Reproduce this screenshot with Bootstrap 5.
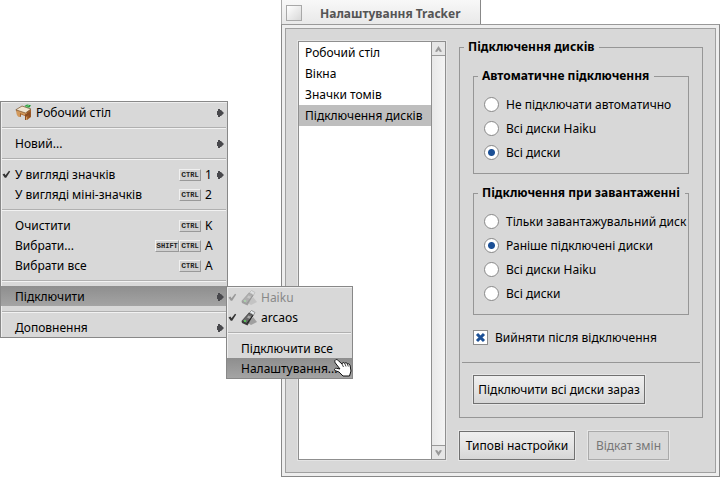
<!DOCTYPE html>
<html lang="uk">
<head>
<meta charset="utf-8">
<meta name="viewport" content="width=device-width, initial-scale=1">
<title>Налаштування Tracker</title>
<link rel="stylesheet" href="https://cdn.jsdelivr.net/npm/bootstrap@5.3.0/dist/css/bootstrap.min.css">
<style>
  body { font: 12px/20px "Noto Sans", sans-serif; color: #000; background: #fff; min-height: 100vh; }
  a { color: inherit; text-decoration: none; }

  /* Tracker settings window */
  .win { left: 281px; right: 0; top: 0; }
  .win-tab { width: 200px; height: 25px; margin-bottom: -1px; padding-left: 4px; gap: 18px; border: 1px solid #aaa; border-width: 0 1px 0 1px; border-right-color: #888; background: linear-gradient(#f8f8f8, #e8e8e8); color: #555; }
  .win-close { width: 16px; height: 16px; border: 1px solid #a8a8a8; background: linear-gradient(135deg, #fff, #d8d8d8); }
  .win-title { padding-top: 2px; }
  .win-frame { border: 1px solid #888; border-top-color: #999; background: #eee; padding: 3px; }
  .win-body { border: 1px solid #a0a0a0; background: #d8d8d8; padding: 12px; gap: 13px; }
  .pane-list { width: 148px; border: 1px solid #8f8f8f; background: #fff; box-shadow: 0 0 0 1px #e4e4e4; }
  .pane-list a { line-height: 21px; padding: 0 6px; }
  .pane-list a.current { background: #bebebe; }
  .sbar { width: 14px; border-left: 1px solid #8f8f8f; background: linear-gradient(90deg, #e8e8e8, #f4f4f4); }
  .sbar button { height: 14px; border: 0; border-bottom: 1px solid #999; background: #e6e6e6; }
  .sbar button:last-child { border-bottom: 0; border-top: 1px solid #999; }

  .settings { min-width: 0; }
  fieldset.box { border: 1px solid #969696; }
  fieldset.boot { margin-top: 13px; }
  fieldset.box > legend { float: none; width: auto; height: 13px; margin: 0 0 0 4px; padding: 0 5px 0 4px; font-size: 12px; line-height: 11px; font-weight: 700; white-space: nowrap; }
  .outer-in { padding: 16px 13px 13px; }
  .inner-in { padding: 9px 0 9px 10px; }
  .opt { height: 24px; gap: 7px; white-space: nowrap; }
  .opt label { line-height: 24px; padding-top: 1px; }
  .opt input, .eject input { appearance: none; width: 15px; height: 15px; margin: 0; flex: none; border: 1px solid #8c8c8c; background: #fff; }
  .opt input { border-radius: 50%; border-color: #888; }
  .opt input:checked { background: radial-gradient(circle, #1c5096 3px, #fff 4px); }
  .eject { height: 15px; margin-top: 15px; gap: 7px; }
  .eject label { padding-top: 1px; }
  .eject svg { left: 2px; top: 2px; pointer-events: none; }
  .rule { height: 1px; background: #969696; margin: 17px -11px 12px; }
  .push { height: 29px; padding: 0 4px; border: 1px solid #707070; border-radius: 0; background: linear-gradient(#efefef, #e4e4e4 50%, #d6d6d6); box-shadow: 0 0 0 1px #e6e6e6; line-height: 26px; color: #000; white-space: nowrap; }
  .push:disabled { color: #777; border-color: #aaa; background: #d8d8d8; }
  .push-wide { min-width: 172px; }
  .push-mid { min-width: 116px; }
  .push-small { min-width: 81px; }
  .foot { margin-top: 13px; gap: 13px; }

  /* Desktop context menus */
  .popmenu { background: #d8d8d8; border: 1px solid #888; box-shadow: inset 1px 1px #eee; color: #000; }
  .main-menu { width: 228px; left: 0; top: 101px; }
  .sub-menu { width: 127px; left: 225px; top: 0; z-index: 2; }
  .item { width: 100%; height: 20px; padding: 1px 0 0 14px; border: 0; background: none; color: inherit; text-align: left; line-height: 20px; white-space: nowrap; }
  .item.active-item { background: linear-gradient(#8e8e8e, #a4a4a4); }
  .item:disabled { color: #888; }
  .line { height: 2px; margin: 5px 1px 4px; background: #b0b0b0; border-bottom: 1px solid #f2f2f2; }
  .tick { left: 1px; top: 6px; }
  .key { height: 12px; text-align: center; border: 1px solid #f0f0f0; border-right-color: #999; border-bottom-color: #999; background: #d0d0d0; color: #222; font: bold 8px/10px "Liberation Mono", monospace; }
  .key small { font-size: 7px; }
  .key-ctrl { width: 22px; }
  .key-shift { width: 24px; }
  .letter { width: 12px; margin-left: 4px; }
  .arrow { width: 8px; margin-right: 2px; }
  .hand { right: 0; bottom: 1px; z-index: 3; }
</style>
</head>
<body class="position-relative overflow-hidden">
<svg class="d-none">
  <symbol id="tick" viewBox="0 0 9 9"><path d="M.5 4.5 2.5 3.5 3.5 5.2 7 .7 8.2 1.5 4.2 7.8H2.8Z" fill="currentColor"/></symbol>
  <symbol id="arr" viewBox="0 0 8 8"><path d="M1 0h2v1h1l3 3-3 3H3v1H1V6H0V2h1Z" fill="#48484c"/></symbol>
  <symbol id="disk" viewBox="0 0 16 16"><path d="M10 15 16 12 12 7 7 13Z" fill="#666" opacity=".5"/><path d="M.5 11 8 2.500 12.500 5 6.500 15.500 1 13Z" fill="#3c3c3c"/><path d="M1.500 10.500 8 3.500 11.500 5.200 5.500 13Z" fill="#686868"/><path d="M8.500 2.500 10.500.5 14 2.500 12.500 5Z" fill="#e8edf0" stroke="#777" stroke-width=".7"/><path d="m6 7.500 1.500-2 2.500 1.300-1.500 2Z" fill="#aaa"/><path d="M6 13.500 12 5.500" stroke="#222" fill="none"/><circle cx="4" cy="11" r=".9" fill="#5e5"/></symbol>
</svg>

<main class="win position-absolute">
  <header class="win-tab d-flex align-items-center">
    <button class="win-close p-0" aria-label="Закрити"></button>
    <span class="win-title fw-bold">Налаштування Tracker</span>
  </header>
  <div class="win-frame">
    <div class="win-body d-flex">
      <div class="pane-list d-flex flex-shrink-0">
        <nav class="flex-grow-1 text-nowrap">
          <a class="d-block" href="#">Робочий стіл</a>
          <a class="d-block" href="#">Вікна</a>
          <a class="d-block" href="#">Значки томів</a>
          <a class="d-block current" href="#">Підключення дисків</a>
        </nav>
        <div class="sbar d-flex flex-column justify-content-between flex-shrink-0">
          <button class="p-0 d-flex align-items-center justify-content-center" aria-label="Вгору"><svg width="7" height="6" viewBox="0 0 7 6"><path d="M0 5.500 3.500 0 7 5.500 5 6 3.500 4 2 6Z" fill="#999"/></svg></button>
          <button class="p-0 d-flex align-items-center justify-content-center" aria-label="Вниз"><svg width="7" height="6" viewBox="0 0 7 6"><path d="M0 .5 3.500 6 7 .5 5 0 3.500 2 2 0Z" fill="#999"/></svg></button>
        </div>
      </div>
      <div class="settings flex-grow-1">
        <fieldset class="box">
          <legend>Підключення дисків</legend>
          <div class="outer-in">
            <fieldset class="box">
              <legend>Автоматичне підключення</legend>
              <div class="inner-in">
                <div class="opt d-flex align-items-center"><input type="radio" name="auto" id="a1"><label for="a1">Не підключати автоматично</label></div>
                <div class="opt d-flex align-items-center"><input type="radio" name="auto" id="a2"><label for="a2">Всі диски Haiku</label></div>
                <div class="opt d-flex align-items-center"><input type="radio" name="auto" id="a3" checked><label for="a3">Всі диски</label></div>
              </div>
            </fieldset>
            <fieldset class="box boot">
              <legend>Підключення при завантаженні</legend>
              <div class="inner-in">
                <div class="opt d-flex align-items-center"><input type="radio" name="boot" id="b1"><label for="b1">Тільки завантажувальний диск</label></div>
                <div class="opt d-flex align-items-center"><input type="radio" name="boot" id="b2" checked><label for="b2">Раніше підключені диски</label></div>
                <div class="opt d-flex align-items-center"><input type="radio" name="boot" id="b3"><label for="b3">Всі диски Haiku</label></div>
                <div class="opt d-flex align-items-center"><input type="radio" name="boot" id="b4"><label for="b4">Всі диски</label></div>
              </div>
            </fieldset>
            <div class="eject d-flex align-items-center position-relative">
              <input type="checkbox" id="eject" checked>
              <svg class="position-absolute" width="11" height="11" viewBox="0 0 11 11"><path d="m2 2 7 7M9 2 2 9" stroke="#1c5096" stroke-width="3"/></svg>
              <label for="eject">Вийняти після відключення</label>
            </div>
            <div class="rule"></div>
            <button class="push push-wide d-block">Підключити всі диски зараз</button>
          </div>
        </fieldset>
        <div class="foot d-flex">
          <button class="push push-mid">Типові настройки</button>
          <button class="push push-small" disabled>Відкат змін</button>
        </div>
      </div>
    </div>
  </div>
</main>

<div class="popmenu main-menu position-absolute" role="menu">
  <button class="item d-flex align-items-center" role="menuitem">
    <svg width="17" height="17" viewBox="0 0 17 17"><path d="M1 6 7 2.500 16 5.500V13L12 16 10 15V12L6 10.500V13L3 12Z" fill="#a4632c"/><path d="M1.500 6v4L3 12.500 5 13V9L10 11.500V16L12 16V8.500Z" fill="#d39a5d"/><path d="M10 10.500 15.500 7.500V12.500L13.500 14V11L11 13V16H10Z" fill="#8b4d22"/><path d="M.8 5.800 7 2 16 5 10.500 9Z" fill="#f1e5d0" stroke="#77502c" stroke-width=".7"/><path d="M9.500 2 12 .5 16 1.200 14.500 3.500 12 3.500Z" fill="#25983b"/><path d="m11 2.500 3-1" stroke="#7bd080"/></svg>
    <span class="ps-1 flex-grow-1">Робочий стіл</span><svg class="arrow" height="8"><use href="#arr"/></svg>
  </button>
  <div class="line"></div>
  <button class="item d-flex align-items-center" role="menuitem"><span class="flex-grow-1">Новий...</span><svg class="arrow" height="8"><use href="#arr"/></svg></button>
  <div class="line"></div>
  <button class="item d-flex align-items-center position-relative" role="menuitem"><svg class="tick position-absolute" width="9" height="9" color="#333"><use href="#tick"/></svg><span class="flex-grow-1">У вигляді значків</span><span class="key key-ctrl">C<small>TRL</small></span><span class="letter">1</span><svg class="arrow" height="8"><use href="#arr"/></svg></button>
  <button class="item d-flex align-items-center" role="menuitem"><span class="flex-grow-1">У вигляді міні-значків</span><span class="key key-ctrl">C<small>TRL</small></span><span class="letter">2</span><span class="arrow"></span></button>
  <div class="line"></div>
  <button class="item d-flex align-items-center" role="menuitem"><span class="flex-grow-1">Очистити</span><span class="key key-ctrl">C<small>TRL</small></span><span class="letter">K</span><span class="arrow"></span></button>
  <button class="item d-flex align-items-center" role="menuitem"><span class="flex-grow-1">Вибрати...</span><span class="key key-shift">S<small>HIFT</small></span><span class="key key-ctrl">C<small>TRL</small></span><span class="letter">A</span><span class="arrow"></span></button>
  <button class="item d-flex align-items-center" role="menuitem"><span class="flex-grow-1">Вибрати все</span><span class="key key-ctrl">C<small>TRL</small></span><span class="letter">A</span><span class="arrow"></span></button>
  <div class="line"></div>
  <div class="position-relative">
    <button class="item active-item d-flex align-items-center" role="menuitem"><span class="flex-grow-1">Підключити</span><svg class="arrow" height="8"><use href="#arr"/></svg></button>
    <div class="popmenu sub-menu position-absolute" role="menu">
      <button class="item d-flex align-items-center position-relative" role="menuitem" disabled><svg class="tick position-absolute" width="9" height="9" color="#999"><use href="#tick"/></svg><svg width="16" height="16" opacity=".35"><use href="#disk"/></svg><span class="ps-1">Haiku</span></button>
      <button class="item d-flex align-items-center position-relative" role="menuitem"><svg class="tick position-absolute" width="9" height="9" color="#333"><use href="#tick"/></svg><svg width="16" height="16"><use href="#disk"/></svg><span class="ps-1">arcaos</span></button>
      <div class="line"></div>
      <button class="item d-flex align-items-center" role="menuitem">Підключити все</button>
      <button class="item active-item d-flex align-items-center" role="menuitem">Налаштування...</button>
      <svg class="hand position-absolute" width="18" height="18" viewBox="0 0 18 18"><path d="M1 1.500C2-.2 3.500.7 4.500 1.800L8 5C8 3.500 10 3 10.700 4.300 11.500 3.400 13 3.600 13.400 4.900 15 4.400 16 5.500 16.200 7L17 12 15.500 17H9L5 13 .8 11.500C-.2 10.500 1 9 2.500 9.300L6 10 1.200 3.800C.8 3 .7 2.200 1 1.500Z" fill="#fff" stroke="#111"/><path d="m8 5 1.500 3M10.700 4.300 12 7.500M13.400 4.900 14.300 7.500" stroke="#111" fill="none" stroke-width=".8"/></svg>
    </div>
  </div>
  <div class="line"></div>
  <button class="item d-flex align-items-center" role="menuitem"><span class="flex-grow-1">Доповнення</span><svg class="arrow" height="8"><use href="#arr"/></svg></button>
</div>
<script src="https://cdn.jsdelivr.net/npm/bootstrap@5.3.0/dist/js/bootstrap.bundle.min.js"></script>
</body>
</html>
